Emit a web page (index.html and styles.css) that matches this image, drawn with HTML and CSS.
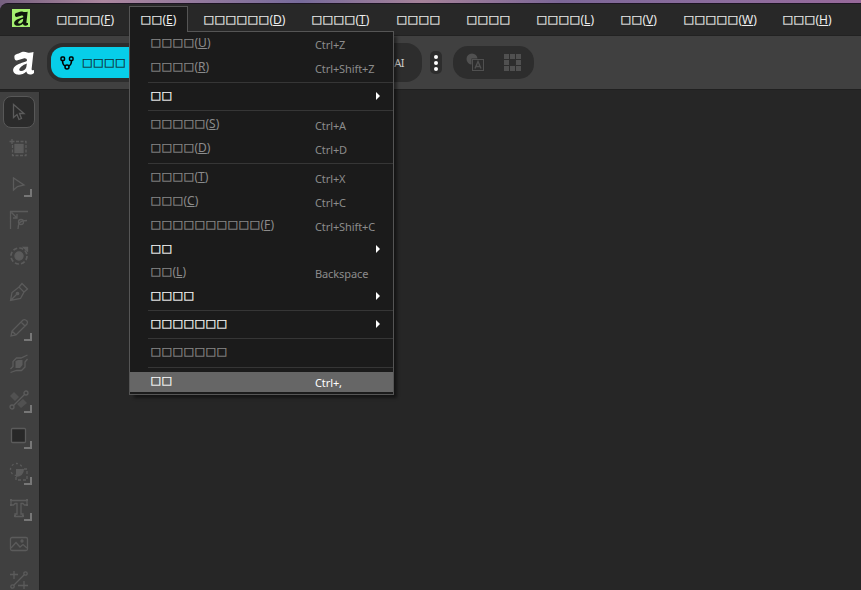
FILE: index.html
```html
<!DOCTYPE html>
<html lang="en">
<head>
    <meta charset="UTF-8">
    <meta name="viewport" content="width=device-width, initial-scale=1.0">
    <title>Affinity</title>
    <link rel="stylesheet" href="styles.css">
</head>
<body>
    <svg class="defs" width="0" height="0">
        <symbol id="logo" viewBox="0 0 22 24" preserveAspectRatio="none">
            <path fill-rule="evenodd" d="M1.500 6.500C1 3 4 3.500 7 2C10 .5 12 .5 15 1.500C17 2 19 1.500 21.500 1L19.500 18C19.500 19.500 20.500 19.500 22 19V22C19 24.500 14.500 24 14 20.500C11 23.500 7 24 4 23.500C-.5 22.500-1 18 2 15.500C5 12.500 10 12 14.500 10C15 8 13.500 7 11 7.500L4 9.500C2 9.500 1.500 8 1.500 6.500ZM14.500 12.500C10 14 6.500 17 6.500 19C8 21.500 13 19.500 14 16Z"/>
        </symbol>
    </svg>
    <div class="window">
        <nav class="menubar">
            <div class="app-icon"><svg width="14" height="15"><use href="#logo"/></svg></div>
            <div class="menu"><span class="box">□□□□</span>(<u>F</u>)</div>
            <div class="menu open">
                <span class="box">□□</span>(<u>E</u>)
                <div class="dropdown">
                    <div class="row off high"><span class="label"><span class="box">□□□□</span>(<u>U</u>)</span><span class="key">Ctrl+Z</span></div>
                    <div class="row off high"><span class="label"><span class="box">□□□□</span>(<u>R</u>)</span><span class="key">Ctrl+Shift+Z</span></div>
                    <div class="line"></div>
                    <div class="row sub"><span class="label"><span class="box">□□</span></span></div>
                    <div class="line"></div>
                    <div class="row off"><span class="label"><span class="box">□□□□□</span>(<u>S</u>)</span><span class="key">Ctrl+A</span></div>
                    <div class="row off"><span class="label"><span class="box">□□□□</span>(<u>D</u>)</span><span class="key">Ctrl+D</span></div>
                    <div class="line tall"></div>
                    <div class="row off"><span class="label"><span class="box">□□□□</span>(<u>T</u>)</span><span class="key">Ctrl+X</span></div>
                    <div class="row off"><span class="label"><span class="box">□□□</span>(<u>C</u>)</span><span class="key">Ctrl+C</span></div>
                    <div class="row off"><span class="label"><span class="box">□□□□□□□□□□</span>(<u>F</u>)</span><span class="key">Ctrl+Shift+C</span></div>
                    <div class="row sub"><span class="label"><span class="box">□□</span></span></div>
                    <div class="row off high short"><span class="label"><span class="box">□□</span>(<u>L</u>)</span><span class="key">Backspace</span></div>
                    <div class="row sub"><span class="label"><span class="box">□□□□</span></span></div>
                    <div class="line"></div>
                    <div class="row sub"><span class="label"><span class="box">□□□□□□□</span></span></div>
                    <div class="line"></div>
                    <div class="row off"><span class="label"><span class="box">□□□□□□□</span></span></div>
                    <div class="line last"></div>
                    <div class="row active"><span class="label"><span class="box">□□</span></span><span class="key">Ctrl+,</span></div>
                </div>
            </div>
            <div class="menu"><span class="box">□□□□□□</span>(<u>D</u>)</div>
            <div class="menu"><span class="box">□□□□</span>(<u>T</u>)</div>
            <div class="menu"><span class="box">□□□□</span></div>
            <div class="menu"><span class="box">□□□□</span></div>
            <div class="menu"><span class="box">□□□□</span>(<u>L</u>)</div>
            <div class="menu"><span class="box">□□</span>(<u>V</u>)</div>
            <div class="menu"><span class="box">□□□□□</span>(<u>W</u>)</div>
            <div class="menu"><span class="box">□□□</span>(<u>H</u>)</div>
        </nav>
        <header class="toolbar">
            <svg class="home" width="21" height="24"><use href="#logo"/></svg>
            <div class="studios">
                <div class="studio">
                    <svg width="14" height="14" viewBox="0 0 14 14" fill="none" stroke="#000" stroke-width="1.500">
                        <rect x="1" y="1" width="3.500" height="3.500" rx="1"/>
                        <rect x="9.500" y="1" width="3.500" height="3.500" rx="1"/>
                        <circle cx="7" cy="11" r="2"/>
                        <path d="M2.500 5C2.500 8 3.500 9 5 10M11.500 5C11.500 8 10.500 9 9 10"/>
                    </svg>
                    <span class="box">□□□□</span>
                </div>
                <span class="ai">AI</span>
            </div>
            <div class="more"><i></i><i></i><i></i></div>
            <div class="pair">
                <svg width="19" height="19" viewBox="0 0 19 19">
                    <circle cx="6" cy="6" r="5.500" fill="#505050"/>
                    <rect x="5.500" y="5.500" width="13" height="13" fill="#2d2d2d"/>
                    <rect x="6.500" y="6.500" width="11" height="11" fill="#2d2d2d" stroke="#505050"/>
                    <path d="M9 15.500L12 8.500L15 15.500M10 13.500H14" fill="none" stroke="#505050" stroke-width="1.400"/>
                </svg>
                <svg width="17" height="17" viewBox="0 0 17 17" fill="#505050">
                    <path d="M0 0h5v5H0zM6 0h5v5H6zM12 0h5v5h-5zM0 6h5v5H0zM12 6h5v5h-5zM0 12h5v5H0zM6 12h5v5H6zM12 12h5v5h-5z"/>
                </svg>
            </div>
        </header>
        <main class="workspace">
            <aside class="tools">
                <div class="tool selected"><svg viewBox="0 0 20 20"><path d="M4.500 2.500V15.500L8 12.500L10 17.500L12.500 16.500L10.500 11.500L15 11.500Z"/></svg></div>
                <div class="tool"><svg viewBox="0 0 20 20"><rect x="6" y="6.500" width="8" height="8" fill="#5b5b5b"/><path stroke-dasharray="3 1.500" d="M7 3.500H17V17.500H3.500V7"/><path d="M3 1V6M.5 3.500H5.500"/></svg></div>
                <div class="tool more-tools"><svg viewBox="0 0 20 20"><path d="M4.500 4V16L8.500 12.500L15 11Z"/></svg></div>
                <div class="tool"><svg viewBox="0 0 20 20"><path d="M1.500 19V1.500H19M2.500 2.500L8 8M8 4V8H4M9 19C9 14 10 10.500 18 10.500"/><circle cx="12" cy="12" r="2.500"/></svg></div>
                <div class="tool"><svg viewBox="0 0 20 20"><circle cx="10" cy="10" r="4" fill="#5b5b5b"/><circle cx="10" cy="10" r="8" stroke-width="1.700" stroke-dasharray="4.200 2.080"/><path d="M14.500 1.500H18.500V5Z" fill="#5b5b5b"/></svg></div>
                <div class="tool"><svg viewBox="0 0 20 20"><path d="M1.500 18.500L3 10.500L10 5L15 10L11.500 16.500L1.500 18.500ZM10 5L13 1.500L18.500 7L15 10M2 18L8 12"/><circle cx="8.500" cy="11.500" r="1.200" fill="#5b5b5b"/></svg></div>
                <div class="tool more-tools"><svg viewBox="0 0 20 20"><path d="M2 18L3 13L14 2Q16 1 18 3Q19 4 18 6L7 17ZM3 13L7 17M12 4L16 8"/></svg></div>
                <div class="tool"><svg viewBox="0 0 20 20"><path d="M6.500 7L9 6H13.500V11L11 14H6.500Z" fill="#5b5b5b" stroke="none"/><path d="M1.500 15L4 12.500V7.500L7.500 4H12L18.500 1M1.500 18.500L7.500 16.500H12.500L16 13V8L18.500 5"/></svg></div>
                <div class="tool more-tools"><svg viewBox="0 0 20 20"><path d="M5 2L10 7L6 11L1 6ZM14 9L18 13L12 18L8 14Z" fill="#515151" stroke="none"/><path d="M4.500 15.500L15.500 4.500"/><circle cx="3" cy="17" r="2"/><circle cx="17" cy="3" r="2"/></svg></div>
                <div class="tool more-tools"><svg viewBox="0 0 20 20"><rect x="2.500" y="2.500" width="14" height="14" rx="1" fill="#282828"/></svg></div>
                <div class="tool more-tools"><svg viewBox="0 0 20 20"><path d="M7 7H15Q15 14 7 15Z" fill="#5b5b5b" stroke="none"/><circle cx="7.500" cy="7.500" r="6" stroke-dasharray="2 2.500"/><path stroke-dasharray="3 2" d="M15 7H18V18H7V15"/></svg></div>
                <div class="tool more-tools"><svg viewBox="0 0 20 20"><path d="M2 2.500H18V7H15.500L14 5.500H12V16H14V18.500H6V16H8V5.500H6L4.500 7H2Z"/><path d="M1 1h2v2H1zM17 1h2v2h-2zM1 6h2v2H1zM17 6h2v2h-2zM5 17h2v2H5zM13 17h2v2h-2z" fill="#5b5b5b" stroke="none"/></svg></div>
                <div class="tool"><svg viewBox="0 0 20 20"><rect x="1.500" y="3.500" width="17" height="13" rx="1.500"/><path d="M2 14L7 8.500L11 13L14 10.500L18 14"/><circle cx="13" cy="7" r="1" fill="#5b5b5b"/></svg></div>
                <div class="tool"><svg viewBox="0 0 20 20"><path d="M5 1V9M1 4.500H9M4.500 15.500L15.500 4.500M15 11V19M9 15.500H19"/><circle cx="3.500" cy="16.500" r="1.700"/><circle cx="16.500" cy="3.500" r="1.700"/></svg></div>
            </aside>
            <section class="canvas"></section>
        </main>
    </div>
</body>
</html>
```

FILE: styles.css
```css
* {
    box-sizing: border-box;
}
body {
    margin: 0;
    height: 590px;
    overflow: hidden;
    padding-top: 3px;
    background: linear-gradient(90deg, #75607f, #ac879f 12%, #776b9b 35%, #a58299 49%, #7c6797 65%, #8c6d9d 85%, #97699a);
    font-family: "Noto Sans", sans-serif;
    font-size: 12px;
    color: #eee;
}
.defs {
    position: absolute;
}
.window {
    display: flex;
    flex-direction: column;
    height: 587px;
    overflow: hidden;
    background-color: #262626;
    border-top: 1px solid #1d1423;
    border-top-left-radius: 8px;
}
.box {
    font-family: "DejaVu Sans", sans-serif;
    font-size: 11px;
    letter-spacing: 0.6px;
    vertical-align: 1px;
    line-height: 1;
    -webkit-text-stroke: 0.25px currentColor;
}
u {
    text-decoration: underline;
    text-underline-offset: 1px;
    text-decoration-thickness: 1px;
}

/* menu bar */
.menubar {
    display: grid;
    grid-template-columns: 45px 84px 63px 108px 85px 70px 70px 84px 63px 99px 78px;
    height: 32px;
    flex: none;
    background-color: #282828;
    border-bottom: 1px solid #222;
}
.app-icon {
    display: flex;
    align-items: center;
    justify-content: center;
    width: 18px;
    height: 18px;
    margin: 5px 0 0 12px;
    background-color: #a5f070;
    fill: #10180d;
}
.menu {
    height: 31px;
    padding-left: 11.5px;
    line-height: 31px;
    white-space: nowrap;
}
.menu.open {
    position: relative;
    z-index: 2;
    width: 59px;
    height: 26px;
    margin-top: 2px;
    padding-left: 10.5px;
    line-height: 26px;
    background-color: #1b1b1b;
    border: 1px solid #555;
    border-bottom: none;
}
.menu.open::after {
    content: "";
    position: absolute;
    z-index: 4;
    left: 0;
    top: 24px;
    width: 57px;
    height: 2px;
    background-color: #1b1b1b;
}
.dropdown {
    position: absolute;
    z-index: 3;
    left: -1px;
    top: 24px;
    width: 265px;
    height: 364px;
    background-color: #1b1b1b;
    border: 1px solid #555;
    box-shadow: 4px 4px 3px -1px rgba(0, 0, 0, 0.45);
}
.row {
    display: grid;
    grid-template-columns: 164.5px 1fr;
    height: 24px;
    padding-left: 20.5px;
    line-height: 23px;
}
.row.high {
    line-height: 21px;
}
.row.short {
    height: 23px;
}
.row.off {
    color: #8c8c8c;
}
.key {
    padding-top: 2px;
    font-size: 11px;
    letter-spacing: -0.1px;
}
.row.sub {
    color: #fff;
}
.row.sub::after {
    content: "";
    width: 4px;
    height: 8px;
    margin: 8px 0 0 61px;
    background-color: #fff;
    clip-path: polygon(0 0, 100% 50%, 0 100%);
}
.row.active {
    height: 20px;
    line-height: 17px;
    color: #fff;
    background-color: #666;
}
.line {
    height: 4px;
    margin-left: 18px;
    border-bottom: 1px solid #1b1b1b;
    background: linear-gradient(#363636, #363636) 0 2px / 100% 1px no-repeat;
}
.line.tall {
    height: 5px;
    background-position: 0 3px;
}
.line.last {
    height: 8px;
    background-position: 0 3px;
}

/* toolbar */
.toolbar {
    display: flex;
    align-items: center;
    flex: none;
    height: 53px;
    padding-left: 13px;
    background-color: #404040;
}
.home {
    fill: #fff;
}
.studios {
    display: flex;
    align-items: center;
    justify-content: space-between;
    width: 375px;
    height: 39px;
    margin-left: 13px;
    padding: 0 18px 0 4px;
    background-color: #2d2d2d;
    border-radius: 16px;
}
.studio {
    display: flex;
    align-items: center;
    gap: 8px;
    width: 104px;
    height: 31px;
    padding-left: 9px;
    background-color: #07cee9;
    border-radius: 12px;
    color: #102d32;
}
.ai {
    font-size: 11px;
    letter-spacing: -0.5px;
    color: #ccc;
}
.more {
    display: flex;
    flex-direction: column;
    align-items: center;
    justify-content: center;
    gap: 2px;
    width: 12px;
    height: 23px;
    margin-left: 8px;
    background-color: #2d2d2d;
    border-radius: 5px;
}
.more i {
    width: 4px;
    height: 4px;
    background-color: #fff;
    border-radius: 2px;
}
.pair {
    display: flex;
    align-items: center;
    gap: 19px;
    width: 81px;
    height: 33px;
    margin-left: 11px;
    padding-left: 13px;
    background-color: #2d2d2d;
    border-radius: 15px;
}

/* tools and canvas */
.workspace {
    display: flex;
    flex: 1;
    min-height: 0;
    padding-top: 2px;
    border-top: 1px solid #202020;
}
.tools {
    width: 39px;
    height: 506px;
    padding: 4px 0 0 1px;
    background-color: #404040;
}
.tool {
    display: flex;
    align-items: center;
    justify-content: center;
    position: relative;
    width: 36px;
    height: 36px;
}
.tool svg {
    width: 20px;
    height: 20px;
    fill: none;
    stroke: #5b5b5b;
    stroke-width: 1.3;
}
.tool.selected {
    width: 32px;
    height: 32px;
    margin: 0 2px 4px;
    background-color: #2b2b2b;
    border: 1px solid #585858;
    border-radius: 8px;
}
.tool.selected + .tool {
    margin-top: -2px;
}
.more-tools::after {
    content: "";
    position: absolute;
    right: 5px;
    bottom: 5px;
    width: 6px;
    height: 6px;
    border-right: 2px solid #777;
    border-bottom: 2px solid #777;
}
.canvas {
    flex: 1;
    background-color: #262626;
    border-left: 1px solid #222;
}
```
